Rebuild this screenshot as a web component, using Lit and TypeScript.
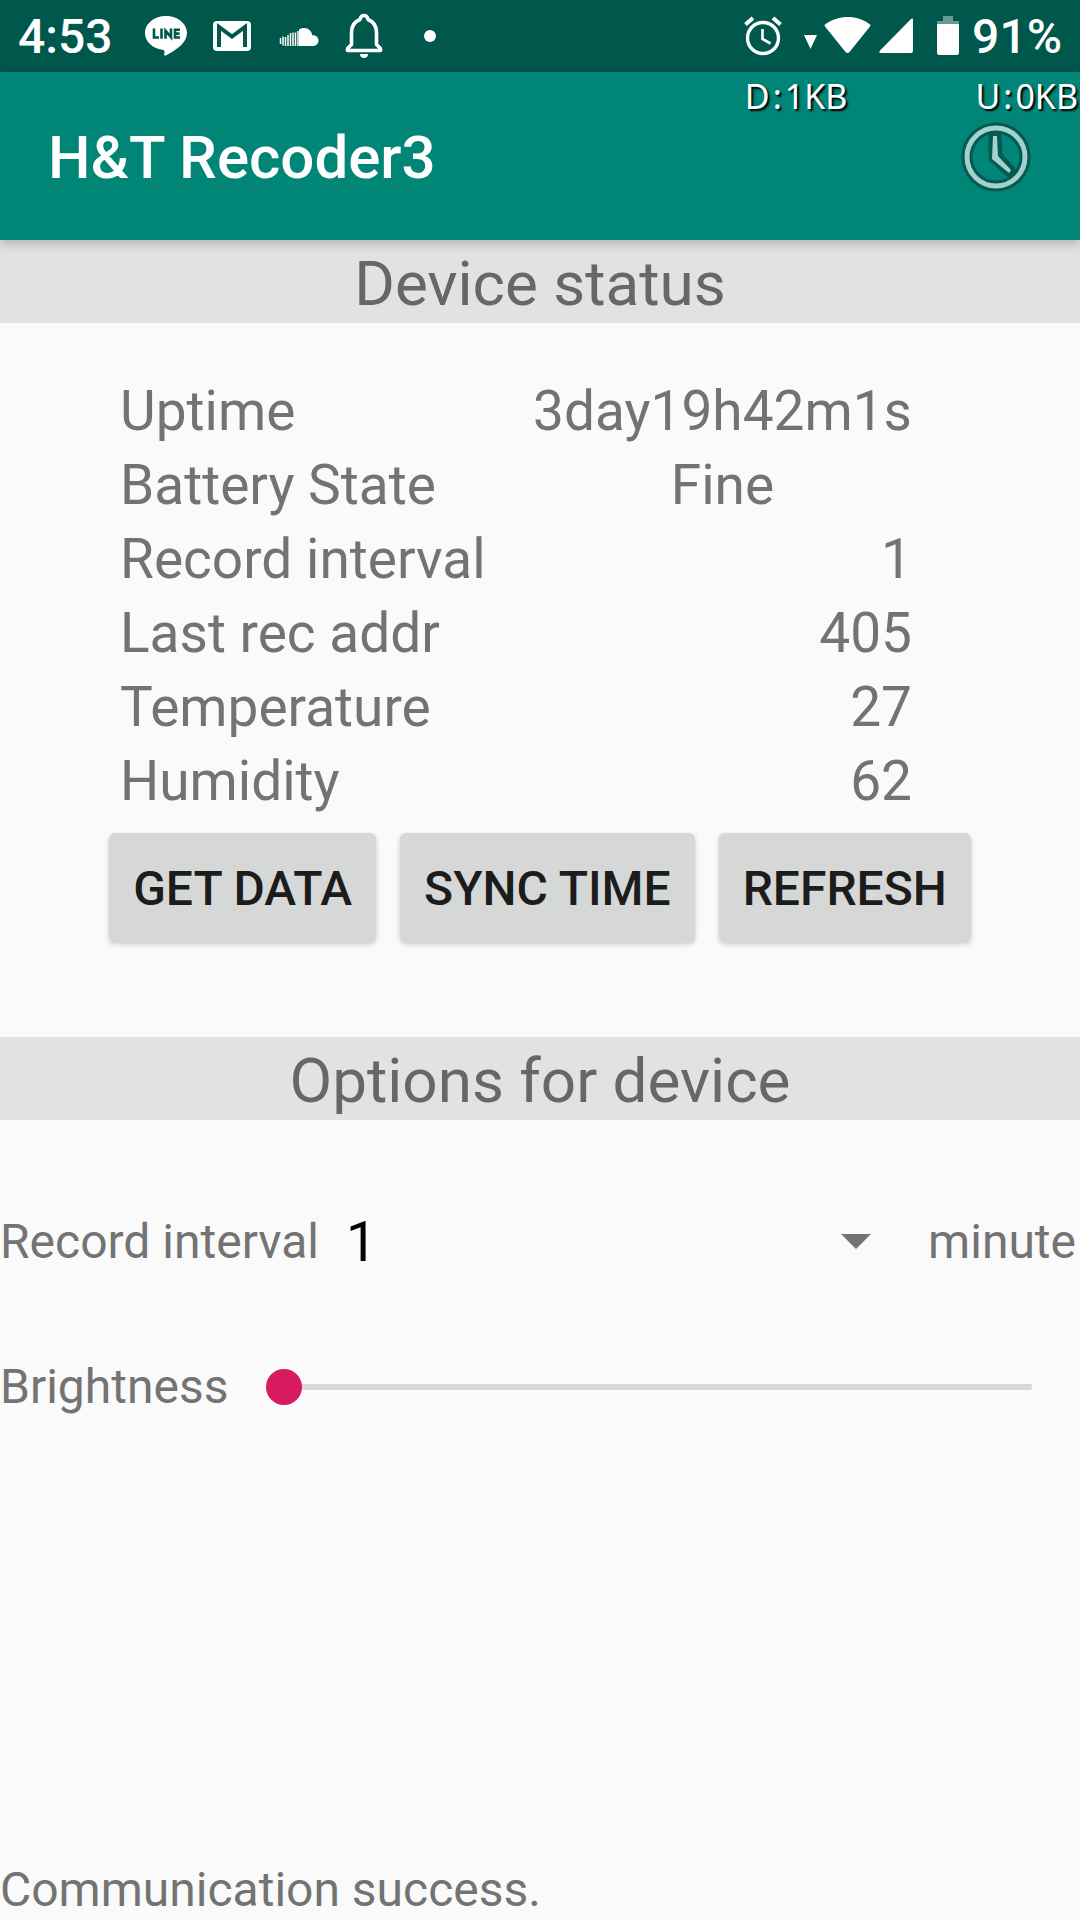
import { LitElement, html, css } from "lit";
import { customElement, state } from "lit/decorators.js";

interface StatusRow {
  label: string;
  value: string;
  centered?: boolean;
}

@customElement("app-root")
export class AppRoot extends LitElement {
  static styles = css`
    :host {
      display: flex;
      flex-direction: column;
      min-height: 100vh;
      background: #fafafa;
      color: #737373;
      font-family: Roboto, "Noto Sans", sans-serif;
      font-size: 48px;
      line-height: 56px;
    }
    * {
      box-sizing: border-box;
    }
    svg {
      display: block;
      flex: none;
    }
    .system {
      display: flex;
      align-items: center;
      justify-content: space-between;
      height: 72px;
      padding: 0 18px;
      background: #00574b;
      color: #fff;
      font-weight: 500;
    }
    .group {
      display: flex;
      align-items: center;
    }
    .reading {
      padding-top: 2px;
    }
    .notices {
      gap: 26px;
      margin-left: 32px;
    }
    .indicators {
      margin-right: 10px;
    }
    .appbar {
      position: relative;
      z-index: 1;
      display: flex;
      align-items: center;
      justify-content: space-between;
      height: 168px;
      padding: 2px 48px 0;
      background: #008577;
      box-shadow: 0 4px 10px rgba(0, 0, 0, 0.2);
    }
    .title {
      margin: 0;
      padding-top: 2px;
      color: #fff;
      font-size: 60px;
      line-height: 72px;
      font-weight: 500;
    }
    .clock {
      display: block;
      padding: 0;
      border: 0;
      background: none;
    }
    .traffic {
      position: absolute;
      top: 0;
      right: 2px;
      display: flex;
      gap: 128px;
      color: #fff;
      font-family: "Noto Sans", "Open Sans", sans-serif;
      font-size: 34px;
      line-height: 48px;
      text-shadow: 2px 2px 2px #000;
    }
    .colon {
      padding: 0 3px;
    }
    .heading {
      margin: 0;
      padding: 7px 0 3px;
      background: #e2e2e2;
      color: #676767;
      font-size: 62px;
      line-height: 73px;
      font-weight: 400;
      text-align: center;
    }
    .status {
      margin: 51px 168px 0 120px;
      border-collapse: collapse;
      font-size: 55px;
      line-height: 74px;
    }
    .status th,
    .status td {
      padding: 0;
      font-weight: 400;
      text-align: left;
    }
    .status td {
      text-align: right;
    }
    .status td.centered {
      padding-left: 24px;
      text-align: center;
    }
    .actions {
      display: flex;
      justify-content: center;
      gap: 24px;
      padding: 15px 0 95px;
    }
    .action {
      height: 109px;
      padding: 2px 24px 0;
      border: 0;
      border-radius: 6px;
      background: #d6d7d7;
      color: #1c1c1c;
      font: 500 48px/56px Roboto, sans-serif;
      box-shadow: 0 2px 5px rgba(0, 0, 0, 0.2);
    }
    .option {
      display: flex;
      align-items: center;
    }
    .interval {
      padding: 86px 4px 0 0;
      line-height: 72px;
    }
    .picker {
      position: relative;
      flex: 1;
      margin: 0 57px 0 24px;
    }
    .select {
      display: block;
      width: 100%;
      padding: 0 0 0 3px;
      border: 0;
      appearance: none;
      background: none;
      color: #000;
      font: 400 55px/72px Roboto, sans-serif;
    }
    .arrow {
      position: absolute;
      right: 0;
      top: 28px;
      pointer-events: none;
    }
    .brightness {
      padding: 77px 48px 0 0;
      line-height: 64px;
    }
    .slider {
      flex: 1;
      min-width: 0;
      height: 36px;
      margin: 0 0 0 38px;
      appearance: none;
      background: linear-gradient(#d8d8d8, #d8d8d8) center / 100% 6px no-repeat;
    }
    .slider::-webkit-slider-thumb {
      appearance: none;
      width: 36px;
      height: 36px;
      border-radius: 50%;
      background: #d81b60;
    }
    .message {
      margin: auto 0 0;
      padding-bottom: 2px;
    }
  `;

  @state() private interval = "1";

  private rows: StatusRow[] = [
    { label: "Uptime", value: "3day19h42m1s" },
    { label: "Battery State", value: "Fine", centered: true },
    { label: "Record interval", value: "1" },
    { label: "Last rec addr", value: "405" },
    { label: "Temperature", value: "27" },
    { label: "Humidity", value: "62" },
  ];

  private onInterval(e: Event) {
    this.interval = (e.target as HTMLSelectElement).value;
  }

  private renderNotices() {
    return html`
      <svg width="42" height="42" viewBox="0 0 42 42">
        <path fill="#fff" d="M21 1C9.500 1 0 8.500 0 18c0 8.500 7.500 15.500 17.500 16.800 2.500.5 2.200 1.700 1.700 4.400-.2 1.500.5 1.800 2 1C31 35 42 28 42 18 42 8.500 32.500 1 21 1z" />
        <path fill="none" stroke="#00574b" stroke-width="2.600" d="M9 13.500v9h5M16.500 13.500v10.200M20.500 23.700v-8l5.500 6.500v-8.700M35 14.800h-5v7.700h5M30 18.600h4.500" />
      </svg>
      <svg width="38" height="30" viewBox="0 0 38 30">
        <rect width="38" height="30" rx="4" fill="#fff" />
        <path fill="none" stroke="#00574b" stroke-width="4" d="M6 26V6l13 9.500L32 6v20" />
      </svg>
      <svg width="42" height="42" viewBox="-2 0 42 42">
        <path fill="#fff" d="M20 31V14.500c2-1.500 3.500-1.500 5-1.500 4.500 0 7.500 3 8.300 7.300C37 19.700 39.500 22.500 39.500 25.500c0 3.200-2.500 5.500-5.500 5.500z" />
        <path stroke="#fff" stroke-width="1.500" d="M1.500 23v6M4 21.500v9M6.500 22v9M9 20v11M11.500 18v13M14 17.500V31M16.500 17.500V31M19 16v15" />
      </svg>
      <svg width="38" height="46" viewBox="0 0 38 46">
        <path fill="none" stroke="#fff" stroke-width="3.600" stroke-linejoin="round" d="M2.500 37.500v-2l4-4V19c0-6.500 3.500-10.500 8.500-12.500C15.500 3.500 17 2.500 19 2.500s3.500 1 4 4c5 2 8.500 6 8.500 12.500v12.500l4 4v2z" />
        <path fill="#fff" d="M15 41h8c0 2.500-1.500 4-4 4s-4-1.500-4-4z" />
      </svg>
      <svg width="64" height="12" viewBox="0 0 64 12">
        <circle cx="21" cy="6" r="6" fill="#fff" />
      </svg>
    `;
  }

  private renderSystemIcons() {
    return html`
      <svg width="38" height="40" viewBox="0 0 38 40">
        <g fill="none" stroke="#fff">
          <circle cx="19" cy="22" r="15.500" stroke-width="3.400" />
          <path stroke-width="2.600" d="M18.500 13v10l8 4.500" />
          <path stroke-width="4" d="M1.500 8.500l7.500-6.500M36.500 8.500l-7.500-6.500" />
        </g>
      </svg>
      <svg width="134" height="42" viewBox="0 0 134 42">
        <path fill="#fff" d="M22 20h13l-6.500 14zM43 9.500C56-.5 76-.5 88 9.500q1 1 0 2L67.500 37q-2 2-4 0L43 11.500q-1-1 0-2zM131 4.500V36q0 2-2 2H98.500q-2-.5-.5-2.500L129 4q2-1 2 .5z" />
      </svg>
      <svg width="46" height="42" viewBox="0 0 46 42">
        <path fill="#fff" fill-opacity=".4" d="M27 1h10v5h6v3H21V6h6z" />
        <path fill="#fff" d="M21 9h22v29q0 2-2 2H23q-2 0-2-2z" />
      </svg>
    `;
  }

  render() {
    return html`
      <div class="system">
        <div class="group">
          <span class="reading">4:53</span>
          <div class="group notices">${this.renderNotices()}</div>
        </div>
        <div class="group">
          <div class="group indicators">${this.renderSystemIcons()}</div>
          <span class="reading">91%</span>
        </div>
      </div>

      <header class="appbar">
        <h1 class="title">H&amp;T Recoder3</h1>
        <button class="clock" aria-label="Time">
          <svg width="72" height="72" viewBox="0 0 72 72">
            <g fill="none">
              <circle cx="36" cy="36" r="29" stroke="#045a50" stroke-width="11" />
              <path stroke="#045a50" stroke-width="9" stroke-linejoin="round" d="M33 15h4l1 20 13 14-2 2-16-14z" />
              <circle cx="36" cy="36" r="29" stroke="#a3d1cc" stroke-width="5" />
            </g>
            <path fill="#a3d1cc" d="M33 15h4l1 20 13 14-2 3-17-14z" />
          </svg>
        </button>
        <div class="traffic">
          <span>D<span class="colon">:</span>1KB</span>
          <span>U<span class="colon">:</span>0KB</span>
        </div>
      </header>

      <h2 class="heading">Device status</h2>
      <table class="status">
        <tbody>
          ${this.rows.map(
            (r) => html`<tr>
              <th scope="row">${r.label}</th>
              <td class=${r.centered ? "centered" : ""}>${r.value}</td>
            </tr>`
          )}
        </tbody>
      </table>
      <div class="actions">
        <button class="action">GET DATA</button>
        <button class="action">SYNC TIME</button>
        <button class="action">REFRESH</button>
      </div>

      <h2 class="heading">Options for device</h2>
      <div class="option interval">
        <label for="interval">Record interval</label>
        <div class="picker">
          <select id="interval" class="select" .value=${this.interval} @change=${this.onInterval}>
            <option>1</option>
            <option>5</option>
            <option>10</option>
          </select>
          <svg class="arrow" width="30" height="15" viewBox="0 0 30 15">
            <path fill="#737373" d="M0 0h30L15 15z" />
          </svg>
        </div>
        <span>minute</span>
      </div>
      <div class="option brightness">
        <label for="brightness">Brightness</label>
        <input id="brightness" class="slider" type="range" min="0" max="100" value="0" />
      </div>

      <p class="message">Communication success.</p>
    `;
  }
}
